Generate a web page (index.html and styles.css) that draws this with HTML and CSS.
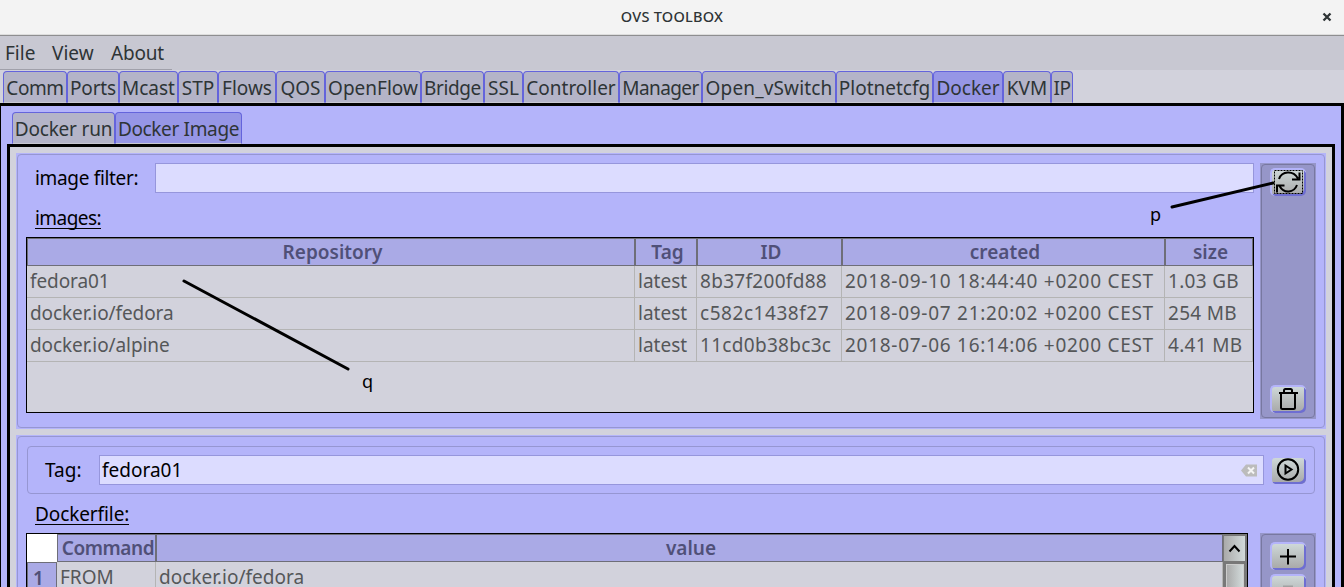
FILE: index.html
```html
<!DOCTYPE html>
<html lang="en">
<head>
<meta charset="utf-8">
<title>OVS TOOLBOX</title>
<link rel="stylesheet" href="styles.css">
</head>
<body>
<div class="window">
  <header class="titlebar"><span class="title">OVS TOOLBOX</span>
    <svg class="close" width="10" height="10" viewBox="0 0 10 10"><path d="M1.5 1.5 8.5 8.5M8.5 1.5 1.5 8.5"/></svg>
  </header>
  <nav class="menubar"><span class="menu m-file">File</span><span class="menu m-view">View</span><span class="menu m-about">About</span></nav>
  <div class="tabs main-tabs">
    <div class="tab"><span>Comm</span></div><div class="tab"><span>Ports</span></div><div class="tab"><span>Mcast</span></div><div class="tab"><span>STP</span></div><div class="tab"><span>Flows</span></div><div class="tab"><span>QOS</span></div><div class="tab"><span>OpenFlow</span></div><div class="tab"><span>Bridge</span></div><div class="tab"><span>SSL</span></div><div class="tab"><span>Controller</span></div><div class="tab"><span>Manager</span></div><div class="tab"><span>Open_vSwitch</span></div><div class="tab"><span>Plotnetcfg</span></div><div class="tab active"><span>Docker</span></div><div class="tab"><span>KVM</span></div><div class="tab"><span>IP</span></div>
  </div>
  <main class="page">
    <div class="tabs sub-tabs"><div class="tab"><span>Docker run</span></div><div class="tab active"><span>Docker Image</span></div></div>
    <div class="inner">
      <section class="panel images-panel">
        <div class="images-main">
          <div class="filter-row"><label>image filter:</label><div class="field"></div></div>
          <h2 class="heading images-heading">images:</h2>
          <div class="table images">
            <div class="th">Repository</div><div class="th">Tag</div><div class="th">ID</div><div class="th">created</div><div class="th">size</div>
            <div class="td repo">fedora01</div><div class="td">latest</div><div class="td id">8b37f200fd88</div><div class="td date">2018-09-10 18:44:40 +0200 CEST</div><div class="td size">1.03 GB</div>
            <div class="td repo">docker.io/fedora</div><div class="td">latest</div><div class="td id wide">c582c1438f27</div><div class="td date">2018-09-07 21:20:02 +0200 CEST</div><div class="td size">254 MB</div>
            <div class="td repo">docker.io/alpine</div><div class="td">latest</div><div class="td id">11cd0b38bc3c</div><div class="td date">2018-07-06 16:14:06 +0200 CEST</div><div class="td size">4.41 MB</div>
          </div>
        </div>
        <aside class="toolbar">
          <div class="btn"><svg width="34" height="28" viewBox="0 0 34 28"><rect class="focus" x="3.500" y="2.500" width="28" height="23"/><path d="M8 11C11 3 22 2 27 10.500M28.500 4.500v7h-7.500M26 17C23 25 13 26 8.500 18M6 24.500v-7h7.500"/></svg></div>
          <div class="btn"><svg width="34" height="28" viewBox="0 0 34 28"><path d="M8 8h19M10 9v13.500q0 1.500 1.500 1.500h11q1.500 0 1.500-1.500V9M13 8V5.500q0-1.500 1.500-1.500h5q1.500 0 1.500 1.500V8"/></svg></div>
        </aside>
      </section>
      <section class="panel build-panel">
        <div class="tag-row"><label>Tag:</label>
          <div class="field"><span>fedora01</span><svg class="clear" width="16" height="13" viewBox="0 0 16 13"><path d="M0 6.500 5 .5h11v12H5z"/><path class="x" d="M7 3.500l6 6M13 3.500l-6 6"/></svg></div>
          <div class="btn flat"><svg width="34" height="28" viewBox="0 0 34 28"><circle cx="17" cy="13.500" r="10.200"/><path d="M14.500 9.500v8l6-4z"/></svg></div>
        </div>
        <h2 class="heading docker-heading">Dockerfile:</h2>
        <div class="build-body">
          <div class="table dockerfile">
            <div class="corner"></div><div class="th command">Command</div><div class="th">value</div>
            <div class="th num">1</div><div class="td">FROM</div><div class="td">docker.io/fedora</div>
            <div class="scroll"><div class="scroll-btn"><svg width="21" height="25" viewBox="0 0 21 25"><path d="M5.500 15.500l5-5.500 5 5.500"/></svg></div><div class="thumb"></div></div>
          </div>
          <aside class="toolbar">
            <div class="btn"><svg width="34" height="28" viewBox="0 0 34 28"><path d="M9 14.500h16M17 7v15.500"/></svg></div>
            <div class="btn"><svg width="34" height="28" viewBox="0 0 34 28"><path class="faint" d="M12 12.500h10"/></svg></div>
          </aside>
        </div>
      </section>
    </div>
  </main>
  <svg class="notes" width="1344" height="587" viewBox="0 0 1344 587"><path d="M1172 207 1273 183M184 281 348 369"/><text x="1150" y="221">p</text><text x="362" y="388">q</text></svg>
</div>
</body>
</html>
```
FILE: styles.css
```css
* { box-sizing: border-box; }
body { margin: 0; overflow: hidden; font: 19px/26px "Noto Sans", sans-serif; color: #000; }
svg { fill: none; stroke: #000; stroke-width: 2; display: block; }
.window { position: relative; width: 1344px; height: 587px; overflow: hidden; background: #d2d2dc; display: flex; flex-direction: column; }
.titlebar { flex: 0 0 36px; background: #f3f3f3; border-bottom: 1px solid #8e8e90; display: grid; grid-template-columns: 1fr auto 1fr; align-items: center; box-shadow: inset 0 -1px #ddd; }
.title { grid-column: 2; font-size: 14.5px; font-weight: 500; letter-spacing: .25px; color: #2e3436; line-height: 20px; padding-bottom: 3px; }
.close { justify-self: end; margin-right: 12px; margin-bottom: 1px; stroke: #2e3436; stroke-width: 2.3; }
.menubar { flex: 0 0 34px; background: linear-gradient(#a0a0aa, #a0a0aa) 0 100% / 172px 1px no-repeat #c8c8d2; display: flex; padding: 4px 0 0 5px; color: #2e3436; }
.menu { white-space: nowrap; letter-spacing: -.2px; }
.m-file { width: 47px; letter-spacing: 0; } .m-view { width: 59px; letter-spacing: 0; }
.tabs { display: flex; color: #2e3436; }
.main-tabs { flex: 0 0 33px; padding: 1px 0 0 3px; }
.tab { height: 32px; border: 1px solid #6464dc; border-bottom: 1px solid #c8c8d2; border-radius: 4px 4px 0 0; background: #b4b4c8; display: flex; justify-content: center; align-items: center; padding-top: 1px; white-space: nowrap; }
.tab.active { background: #9696e6; }
.main-tabs .tab { width: 64px; }
.main-tabs .tab:nth-child(1) { letter-spacing: -.4px; }
.main-tabs .tab:nth-child(2) { width: 52px; letter-spacing: -.15px; } .main-tabs .tab:nth-child(3) { width: 59px; }
.main-tabs .tab:nth-child(4) { width: 40px; } .main-tabs .tab:nth-child(5) { width: 58px; }
.main-tabs .tab:nth-child(6) { width: 49px; } .main-tabs .tab:nth-child(7) { width: 96px; }
.main-tabs .tab:nth-child(8) { width: 63px; letter-spacing: -.4px; } .main-tabs .tab:nth-child(9) { width: 39px; }
.main-tabs .tab:nth-child(10) { width: 96px; } .main-tabs .tab:nth-child(11) { width: 83px; letter-spacing: -.6px; }
.main-tabs .tab:nth-child(12) { width: 134px; letter-spacing: .15px; } .main-tabs .tab:nth-child(13) { width: 97px; }
.main-tabs .tab:nth-child(14) { width: 70px; } .main-tabs .tab:nth-child(15) { width: 48px; }
.main-tabs .tab:nth-child(16) { width: 22px; letter-spacing: -.5px; }
.page { flex: 1; background: #b4b4fa; border: solid #000; border-width: 3px 3px 0 1px; padding: 6px 6px 0; display: flex; flex-direction: column; min-height: 0; }
.sub-tabs { flex: 0 0 32px; padding-left: 5px; }
.sub-tabs .tab { width: 103px; letter-spacing: -.2px; } .sub-tabs .tab.active { width: 127px; letter-spacing: -.35px; }
.inner { flex: 1; min-height: 0; background: #d2d2dc; border: 3px solid #000; border-bottom: 0; padding: 6px 6px 0; display: flex; flex-direction: column; gap: 6px; }
.panel { background: #b4b4fa; position: relative; width: 1310px; flex: none; }
.panel::before, .toolbar::before { content: ""; position: absolute; inset: 1px; border: 1px solid #9696d2; border-radius: 4px; pointer-events: none; }
.images-panel { height: 276px; padding: 10px 10px; display: flex; gap: 6px; }
.images-main { width: 1228px; }
.filter-row { display: flex; align-items: center; height: 30px; }
.filter-row label { width: 129px; padding-left: 9px; letter-spacing: -.33px; }
.field { border: 1px solid #9696dc; background: #dcdcff; height: 30px; flex: 1; display: flex; justify-content: space-between; align-items: center; padding: 0 6px 0 2px; }
.heading { font-size: 19px; font-weight: 400; margin: 0 0 0 9px; width: max-content; border-bottom: 1px solid #000; line-height: 22px; height: 22px; }
.images-heading { margin-top: 14px; margin-bottom: 8px; letter-spacing: -.55px; }
.table { display: grid; border: 1px solid #000; background: #d2d2dc; color: #555759; align-content: start; }
.images { height: 176px; grid-template-columns: 608px 62px 145px 323px 88px; grid-template-rows: 28px 32px 32px 32px; }
.th { background: #aaaae6; color: #505078; font-weight: 600; text-align: center; line-height: 27px; border: solid #6e6e78; border-width: 1px; padding-left: 3px; }
.th.command { letter-spacing: -.45px; padding-left: 3px; }
.td { border: solid #b4b4b4; border-width: 0 1px 1px 0; line-height: 31px; padding-left: 3px; white-space: nowrap; }
.td.repo { letter-spacing: -.1px; }
.td.id { letter-spacing: .3px; }
.td.id.wide { letter-spacing: .55px; }
.td.date { letter-spacing: .72px; }
.td.size { letter-spacing: .3px; }
.toolbar { width: 56px; background: #9696c8; position: relative; display: flex; flex-direction: column; align-items: center; justify-content: space-between; padding: 5px 0 6px; }
.toolbar::before { border-color: #7878a0; }
.btn { width: 36px; height: 28px; border-radius: 5px; border: solid #b4b4fa; border-width: 2px 0 0 2px; background: linear-gradient(#ced8d8, #a6a6a6); box-shadow: inset -2px -2px #6e6ed2; display: flex; align-items: center; justify-content: center; overflow: hidden; flex: none; }
.btn svg { flex: none; margin: -2px 0 0 -2px; }
.focus { stroke-width: 1; stroke-dasharray: 2 1; }
.faint { stroke: #a0a0a0; }
.build-panel { height: 300px; padding: 11px 11px 0; }
.tag-row { height: 48px; border: 1px solid #9696d2; border-radius: 4px; display: flex; align-items: center; padding: 0 8px 0 17px; }
.tag-row label { width: 54px; }
.flat { margin-left: 6px; }
.clear { fill: #bcbcbc; stroke: none; }
.clear .x { stroke: #f5f5f5; }
.docker-heading { margin: 9px 0 8px 8px; letter-spacing: -.1px; }
.build-body { display: flex; justify-content: space-between; height: 150px; margin: 0 -1px; }
.dockerfile { width: 1222px; grid-template-columns: 30px 99px 1067px 24px; grid-template-rows: 28px 32px; }
.corner { background: #fff; }
.num { text-align: left; padding-left: 5px; line-height: 30px; }
.scroll { grid-column: 4; grid-row: 1 / 4; height: 150px; background: #787878; padding: 2px 1px; }
.scroll-btn { width: 21px; height: 25px; background: linear-gradient(90deg, #aaa, #d2dada); }
.thumb { width: 18px; height: 100px; margin: 3px 0 0 2px; background: linear-gradient(90deg, #aaa, #d2dada); border: 1px solid #ccc; }
.build-body .toolbar { justify-content: start; padding-top: 9px; gap: 4px; }
.notes { position: absolute; inset: 0; pointer-events: none; }
.notes path { stroke-width: 3; stroke-linecap: round; }
.notes text { fill: #000; stroke: none; font: 18px "Noto Sans", sans-serif; }
```
